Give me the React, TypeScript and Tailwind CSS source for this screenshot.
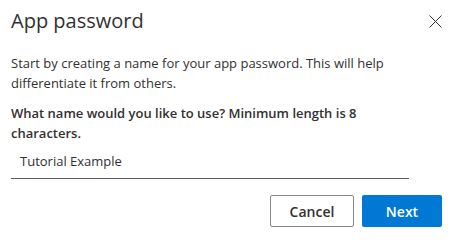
export default function App() {
  return (
    <div
      className="w-[458px] h-[235px] bg-white pl-[11px] pr-[16px] pt-[6px] text-[#323130]"
      style={{ fontFamily: '"Open Sans", "Noto Sans", sans-serif' }}
    >
      <div className="flex items-start justify-between">
        <h2 className="text-[20px] leading-[30px] font-medium">App password</h2>
        <button className="mt-[9px] w-[13px] h-[13px] text-[#323130]" aria-label="Close">
          <svg viewBox="0 0 13 13" width="13" height="13">
            <path d="M0.5 0.5 L12.5 12.5 M12.5 0.5 L0.5 12.5" stroke="currentColor" strokeWidth="1" fill="none" />
          </svg>
        </button>
      </div>

      <p className="mt-[17px] w-[398px] text-[13px] leading-5">
        Start by creating a name for your app password. This will help differentiate it from others.
      </p>

      <p className="mt-[10px] w-[398px] text-[13px] leading-5 font-semibold">
        What name would you like to use? Minimum length is 8 characters.
      </p>

      <div className="mt-[8px] w-[398px] border-b border-[#605e5c] pl-[9px] pb-[7px] text-[13px] leading-5">
        Tutorial Example
      </div>

      <div className="mt-[16px] flex justify-end gap-2">
        <button className="w-[84px] h-[32px] rounded-[2px] border border-[#8a8886] bg-white text-[14px] font-semibold text-[#323130]">
          Cancel
        </button>
        <button className="w-[80px] h-[32px] rounded-[2px] bg-[#0078d4] text-[14px] font-semibold text-white">
          Next
        </button>
      </div>
    </div>
  )
}
